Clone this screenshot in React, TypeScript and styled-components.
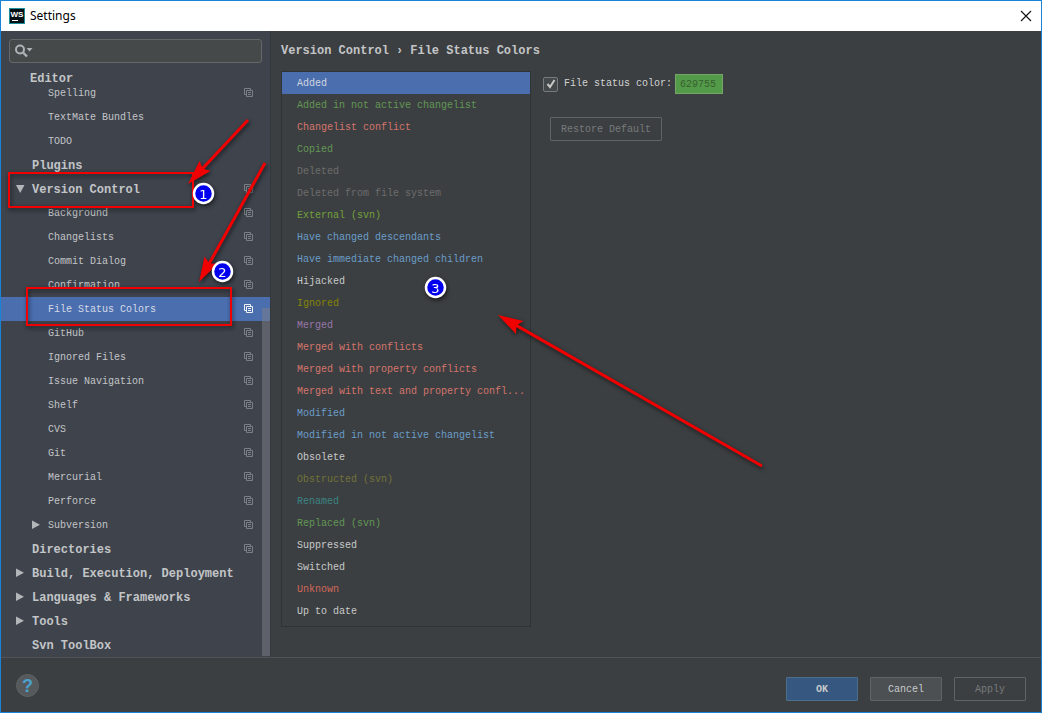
import React, { useState } from "react";
import styled, { createGlobalStyle, css } from "styled-components";

const GlobalStyle = createGlobalStyle`
  * { box-sizing: border-box; }
  body { margin: 0; background: #3c3f41; }
  button, input { font: inherit; color: inherit; }
`;

const Window = styled.div`
  position: relative;
  display: flex;
  flex-direction: column;
  min-height: 100vh;
  overflow: hidden;
  border: 1px solid #1883d7;
  background: #3c3f41;
  color: #c3c5c7;
  font: 10px/16px "Liberation Mono", monospace;
`;

const TitleBar = styled.header`
  display: flex;
  align-items: center;
  gap: 5px;
  height: 30px;
  padding: 0 7px 0 8px;
  background: #fff;
  color: #000;
`;

const Title = styled.h1`
  flex: 1;
  margin: 0;
  font: 12px/16px "Noto Sans", sans-serif;
`;

const CloseButton = styled.button`
  display: flex;
  padding: 2px;
  border: 0;
  background: none;
`;

const Body = styled.div`
  display: flex;
  flex: 1;
`;

const Sidebar = styled.aside`
  position: relative;
  flex: none;
  width: 270px;
  padding-top: 8px;
  background: #3e434c;
  border-right: 1px solid #35393d;
`;

const SearchBox = styled.label`
  display: flex;
  align-items: center;
  height: 24px;
  margin: 0 8px;
  padding: 0 4px;
  border: 1px solid #646868;
  border-radius: 3px;
  background: #45494a;
`;

const SearchInput = styled.input`
  flex: 1;
  min-width: 0;
  padding: 0 4px;
  border: 0;
  outline: 0;
  background: none;
`;

const GroupHeading = styled.h2`
  margin: 8px 0 -6px 29px;
  padding-top: 1px;
  font-size: 12px;
  line-height: 15px;
`;

const Tree = styled.ul`
  margin: 0;
  padding: 0;
  list-style: none;
`;

const TreeRow = styled.button<{ $level: number; $active: boolean }>`
  display: flex;
  align-items: center;
  gap: 6px;
  width: 100%;
  height: 24px;
  padding: 0 16px 0 ${(p) => (p.$level === 2 ? 29 : 13)}px;
  border: 0;
  text-align: left;
  background: ${(p) => (p.$active ? "#4b6eaf" : "none")};
  color: ${(p) => (p.$active ? "#d5dbe6" : "#c3c5c7")};
  ${(p) =>
    p.$level === 1 &&
    css`
      font-size: 12px;
      font-weight: bold;
    `}
`;

const TwistySlot = styled.span`
  display: flex;
  align-items: center;
  justify-content: center;
  width: 12px;
`;

const RowLabel = styled.span`
  flex: 1;
  padding-top: 2px;
  white-space: nowrap;
`;

const ScrollThumb = styled.div`
  position: absolute;
  right: 0;
  bottom: 1px;
  width: 8px;
  height: 348px;
  background: rgba(125, 128, 135, 0.5);
`;

const Main = styled.main`
  flex: 1;
  min-width: 0;
  padding: 12px 10px;
`;

const Breadcrumb = styled.h2`
  display: flex;
  gap: 7px;
  margin: 0 0 12px;
  padding-top: 1px;
  font-size: 12px;
  line-height: 15px;
  white-space: nowrap;
`;

const Panels = styled.div`
  display: flex;
  align-items: flex-start;
  gap: 12px;
`;

const StatusList = styled.ul`
  flex: none;
  width: 250px;
  margin: 0;
  padding: 0 0 4px;
  border: 1px solid #303335;
  list-style: none;
`;

const StatusRow = styled.button<{ $color: string; $active: boolean }>`
  display: block;
  width: 100%;
  height: 22px;
  padding: 2px 0 0 15px;
  border: 0;
  text-align: left;
  white-space: nowrap;
  background: ${(p) => (p.$active ? "#4b6eaf" : "none")};
  color: ${(p) => (p.$active ? "#d0d6e0" : p.$color)};
`;

const ColorForm = styled.div`
  display: flex;
  flex-direction: column;
  align-items: flex-start;
  gap: 23px;
  padding-top: 3px;
`;

const ColorLine = styled.div`
  display: flex;
  align-items: center;
  height: 20px;
`;

const CheckLabel = styled.label`
  display: flex;
  align-items: center;
  gap: 6px;
  width: 132px;
  color: #d0d2d3;
  white-space: nowrap;
`;

const CheckBox = styled.input`
  appearance: none;
  width: 15px;
  height: 15px;
  margin: 0;
  border: 1px solid #777b7d;
  border-radius: 2px;
  background: #43494a
    url("data:image/svg+xml,%3Csvg xmlns='http://www.w3.org/2000/svg' viewBox='0 0 12 12'%3E%3Cpath d='M2.5 6l2.5 3 4.5-7' fill='none' stroke='%23c8c8c8' stroke-width='2'/%3E%3C/svg%3E")
    center / 12px no-repeat;
`;

const ColorInput = styled.input`
  width: 48px;
  height: 20px;
  padding: 0 4px;
  border: 1px solid #75a569;
  outline: 0;
  background: #549b49;
  color: #365f30;
`;

const Button = styled.button<{ $kind?: "primary" | "normal"; $wide?: boolean }>`
  width: ${(p) => (p.$wide ? 112 : 72)}px;
  height: 24px;
  padding: 2px 0 0;
  border: 1px solid #606467;
  border-radius: 1px;
  background: ${(p) =>
    p.$kind === "primary" ? "#365880" : p.$kind === "normal" ? "#4c5052" : "none"};
  ${(p) => p.$kind === "primary" && "border-color: #4c708c; font-weight: bold;"}
  color: ${(p) => (p.disabled ? "#777a7c" : "#c8cacc")};
`;

const RestoreButton = styled(Button)`
  margin-left: 7px;
`;

const Footer = styled.footer`
  display: flex;
  align-items: center;
  gap: 12px;
  height: 55px;
  padding: 7px 15px 0;
  border-top: 1px solid #515456;
`;

const HelpButton = styled.button`
  width: 23px;
  height: 23px;
  margin: -6px auto 0 0;
  padding: 0;
  border: 1px solid #5e6366;
  border-radius: 50%;
  background: #55595c;
  color: #4aa0cc;
  font: bold 18px/20px "Liberation Sans", sans-serif;
`;

const Annotations = styled.svg`
  position: absolute;
  top: -1px;
  left: -1px;
  pointer-events: none;
  filter: drop-shadow(1px 2px 2px rgba(0, 0, 0, 0.6));
`;

type TreeEntry = { label: string; level?: 1; twisty?: "open" | "closed"; copy?: boolean };

const treeEntries: TreeEntry[] = [
  { label: "Spelling", copy: true },
  { label: "TextMate Bundles" },
  { label: "TODO" },
  { label: "Plugins", level: 1 },
  { label: "Version Control", level: 1, twisty: "open", copy: true },
  { label: "Background", copy: true },
  { label: "Changelists", copy: true },
  { label: "Commit Dialog", copy: true },
  { label: "Confirmation", copy: true },
  { label: "File Status Colors", copy: true },
  { label: "GitHub", copy: true },
  { label: "Ignored Files", copy: true },
  { label: "Issue Navigation", copy: true },
  { label: "Shelf", copy: true },
  { label: "CVS", copy: true },
  { label: "Git", copy: true },
  { label: "Mercurial", copy: true },
  { label: "Perforce", copy: true },
  { label: "Subversion", twisty: "closed", copy: true },
  { label: "Directories", level: 1, copy: true },
  { label: "Build, Execution, Deployment", level: 1, twisty: "closed" },
  { label: "Languages & Frameworks", level: 1, twisty: "closed" },
  { label: "Tools", level: 1, twisty: "closed" },
  { label: "Svn ToolBox", level: 1 },
];

const statuses: [string, string][] = [
  ["Added", "#629755"],
  ["Added in not active changelist", "#629755"],
  ["Changelist conflict", "#d5756c"],
  ["Copied", "#629755"],
  ["Deleted", "#6c6c6c"],
  ["Deleted from file system", "#6c6c6c"],
  ["External (svn)", "#72a03a"],
  ["Have changed descendants", "#6a9dca"],
  ["Have immediate changed children", "#6a9dca"],
  ["Hijacked", "#c8cacb"],
  ["Ignored", "#848504"],
  ["Merged", "#9876aa"],
  ["Merged with conflicts", "#d5756c"],
  ["Merged with property conflicts", "#d5756c"],
  ["Merged with text and property confl...", "#d5756c"],
  ["Modified", "#6a9dca"],
  ["Modified in not active changelist", "#6a9dca"],
  ["Obsolete", "#c8cacb"],
  ["Obstructed (svn)", "#727238"],
  ["Renamed", "#3a8484"],
  ["Replaced (svn)", "#629755"],
  ["Suppressed", "#c8cacb"],
  ["Switched", "#c8cacb"],
  ["Unknown", "#d1675a"],
  ["Up to date", "#c8cacb"],
];

function Twisty({ state }: { state?: "open" | "closed" }) {
  return (
    <TwistySlot>
      {state && (
        <svg width="10" height="10" viewBox="0 0 10 10" fill="#b4b7ba" aria-hidden="true">
          <path d={state === "open" ? "M1 1h8.500L5.200 9z" : "M1 .5v8.500L9 4.700z"} />
        </svg>
      )}
    </TwistySlot>
  );
}

function CopyIcon({ active }: { active: boolean }) {
  return (
    <svg width="10" height="10" viewBox="0 0 10 10" fill="none" stroke={active ? "#f0f3f8" : "#7a7f85"} aria-hidden="true">
      <path d="M2.5 6.5h-2v-6h6v2M2.500 2.500h6v6h-6zM4 4.500h3M4 6.500h3" />
    </svg>
  );
}

function Arrow({ from, to }: { from: [number, number]; to: [number, number] }) {
  const dx = to[0] - from[0];
  const dy = to[1] - from[1];
  const len = Math.hypot(dx, dy);
  const angle = (Math.atan2(dy, dx) * 180) / Math.PI;
  return (
    <g transform={`translate(${from[0]} ${from[1]}) rotate(${angle})`} fill="#f00000">
      <path d={`M0 -1.5H${len - 22}L${len - 25} -7.500L${len} 0L${len - 25} 7.500L${len - 22} 1.5H0z`} />
    </g>
  );
}

function Badge({ x, y, n }: { x: number; y: number; n: number }) {
  return (
    <g>
      <circle cx={x} cy={y} r="9.5" fill="#0000ee" stroke="#fff" strokeWidth="2.5" />
      <text x={x} y={y + 5} fill="#fff" fontFamily="DejaVu Sans" fontSize="13" textAnchor="middle">
        {n}
      </text>
    </g>
  );
}

export default function App() {
  const [page, setPage] = useState("File Status Colors");
  const [status, setStatus] = useState("Added");

  return (
    <Window>
      <GlobalStyle />
      <TitleBar>
        <svg width="16" height="16" viewBox="0 0 16 16" aria-hidden="true">
          <path d="M0 0h16v16H0z" fill="#1c8f9b" />
          <path d="M1 1h14v14H1z" fill="#071014" />
          <text x="8" y="9" fill="#fff" fontFamily="Liberation Sans" fontWeight="bold" fontSize="8" textAnchor="middle">
            WS
          </text>
          <path d="M3 12h6v1H3z" fill="#fff" />
        </svg>
        <Title>Settings</Title>
        <CloseButton aria-label="Close">
          <svg width="12" height="12" viewBox="0 0 12 12" stroke="#111" strokeWidth="1.1">
            <path d="M1 1l10 10M11 1L1 11" />
          </svg>
        </CloseButton>
      </TitleBar>
      <Body>
        <Sidebar>
          <SearchBox>
            <svg width="20" height="14" viewBox="0 0 20 14" fill="none" aria-hidden="true">
              <circle cx="6" cy="5.5" r="4" stroke="#aeb2b4" strokeWidth="2" />
              <path d="M9 8.500l4 4" stroke="#aeb2b4" strokeWidth="2.4" />
              <path d="M12.500 4h6l-3 3.500z" fill="#aeb2b4" />
            </svg>
            <SearchInput aria-label="Search settings" />
          </SearchBox>
          <GroupHeading>Editor</GroupHeading>
          <Tree>
            {treeEntries.map((e) => (
              <li key={e.label}>
                <TreeRow $level={e.level ?? 2} $active={page === e.label} onClick={() => setPage(e.label)}>
                  <Twisty state={e.twisty} />
                  <RowLabel>{e.label}</RowLabel>
                  {e.copy && <CopyIcon active={page === e.label} />}
                </TreeRow>
              </li>
            ))}
          </Tree>
          <ScrollThumb />
        </Sidebar>
        <Main>
          <Breadcrumb>
            <span>Version Control</span>
            <span>›</span>
            <span>File Status Colors</span>
          </Breadcrumb>
          <Panels>
            <StatusList>
              {statuses.map(([label, color]) => (
                <li key={label}>
                  <StatusRow $color={color} $active={status === label} onClick={() => setStatus(label)}>
                    {label}
                  </StatusRow>
                </li>
              ))}
            </StatusList>
            <ColorForm>
              <ColorLine>
                <CheckLabel>
                  <CheckBox type="checkbox" defaultChecked />
                  File status color:
                </CheckLabel>
                <ColorInput aria-label="Color value" defaultValue="629755" />
              </ColorLine>
              <RestoreButton $wide disabled>
                Restore Default
              </RestoreButton>
            </ColorForm>
          </Panels>
        </Main>
      </Body>
      <Footer>
        <HelpButton aria-label="Help">?</HelpButton>
        <Button $kind="primary">OK</Button>
        <Button $kind="normal">Cancel</Button>
        <Button disabled>Apply</Button>
      </Footer>
      <Annotations width="800" height="500" viewBox="0 0 800 500">
        <g fill="none" stroke="#f00000" strokeWidth="2">
          <path d="M9 173h184v34H9zM27 288h204v37H27z" />
        </g>
        <Arrow from={[248, 120]} to={[188, 184]} />
        <Arrow from={[265, 163]} to={[199, 282]} />
        <Arrow from={[762, 466]} to={[498, 315]} />
        <Badge x={203.5} y={193.5} n={1} />
        <Badge x={222.5} y={271.5} n={2} />
        <Badge x={435.5} y={287.5} n={3} />
      </Annotations>
    </Window>
  );
}
